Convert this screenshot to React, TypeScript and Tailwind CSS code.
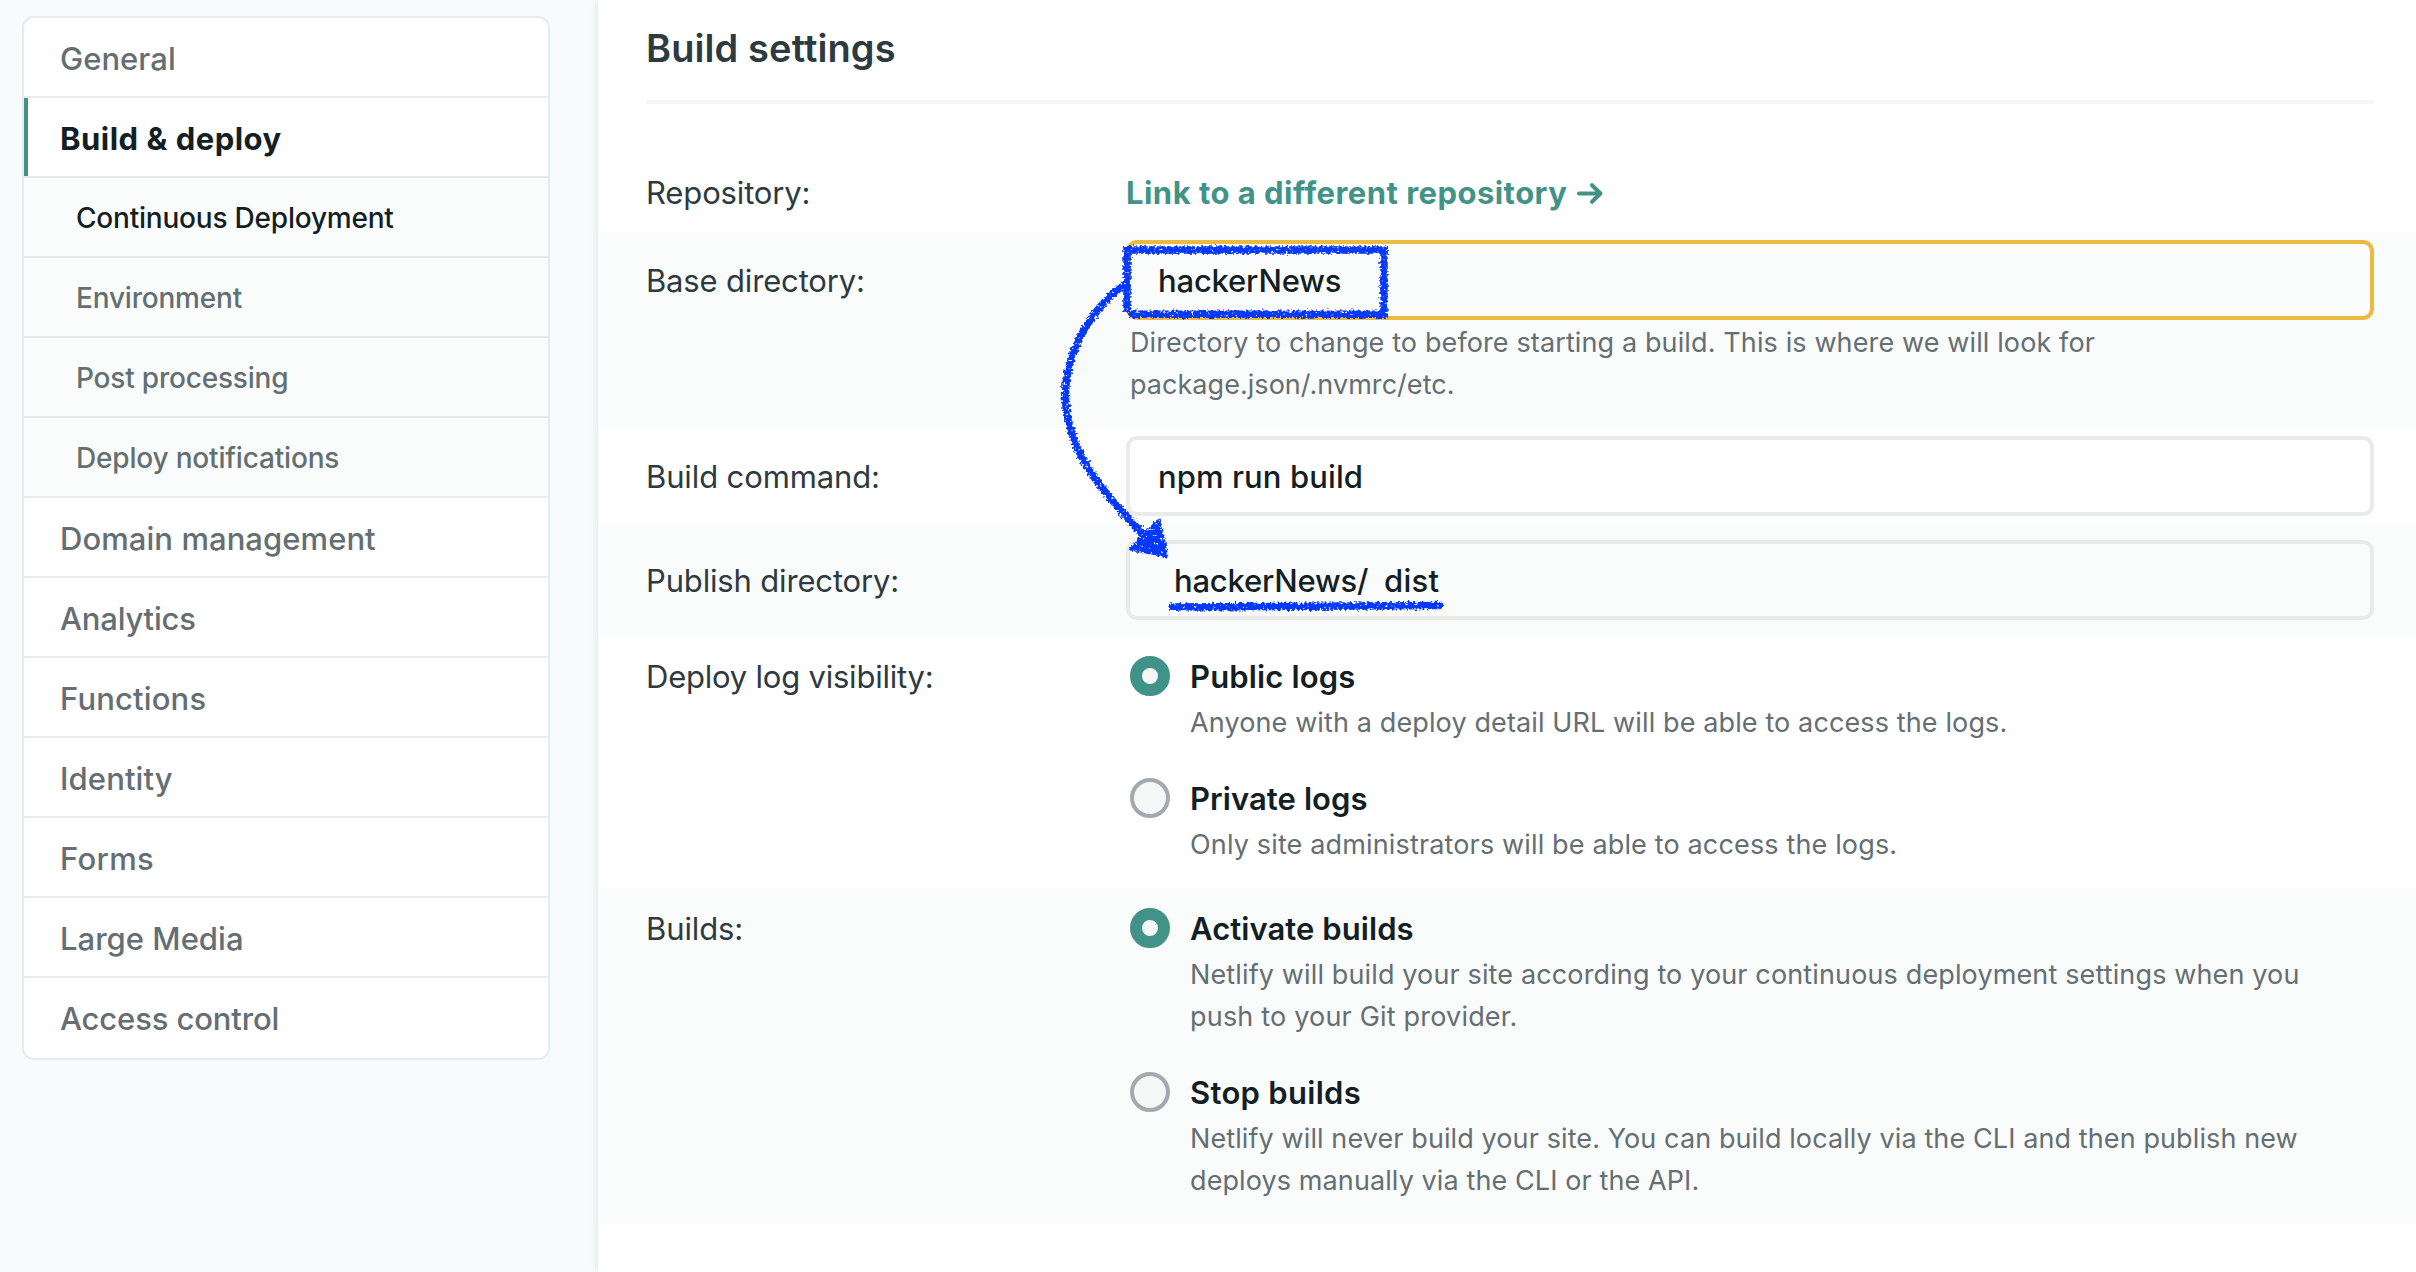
import React from "react";

type NavItem = { label: string; kind: "main" | "active" | "sub" | "current"; tracking: string };

const NAV: NavItem[] = [
  { label: "General", kind: "main", tracking: "tracking-[0.03px]" },
  { label: "Build & deploy", kind: "active", tracking: "tracking-[0.5px]" },
  { label: "Continuous Deployment", kind: "current", tracking: "tracking-[-0.21px]" },
  { label: "Environment", kind: "sub", tracking: "tracking-[-0.2px]" },
  { label: "Post processing", kind: "sub", tracking: "tracking-[-0.2px]" },
  { label: "Deploy notifications", kind: "sub", tracking: "tracking-[-0.18px]" },
  { label: "Domain management", kind: "main", tracking: "tracking-[0.06px]" },
  { label: "Analytics", kind: "main", tracking: "tracking-[-0.2px]" },
  { label: "Functions", kind: "main", tracking: "tracking-[0.16px]" },
  { label: "Identity", kind: "main", tracking: "tracking-[0.12px]" },
  { label: "Forms", kind: "main", tracking: "tracking-[0.3px]" },
  { label: "Large Media", kind: "main", tracking: "tracking-[0.02px]" },
  { label: "Access control", kind: "main", tracking: "tracking-[-0.14px]" },
];

const NAV_STYLE = {
  main: "bg-white pl-9 pt-[17px] text-[31px] font-medium text-[#646e73]",
  active: "border-l-4 border-l-[#419388] bg-white pl-8 pt-[17px] text-[31px] font-bold text-[#131e25]",
  sub: "bg-[#fafcfb] pl-[52px] pt-4 text-[28px] font-medium text-[#646e73]",
  current: "bg-[#fafcfb] pl-[52px] pt-4 text-[28px] font-medium text-[#131e25]",
};

function Sidebar() {
  return (
    <nav className="ml-[22px] mt-4 h-[1044px] w-[528px] shrink-0 overflow-hidden rounded-[12px] border-2 border-[#e9ebeb] bg-white">
      {NAV.map((item) => (
        <div key={item.label} className="h-20 border-b-2 border-[#e9ebeb] last:border-b-0">
          <div className={`h-full leading-[48px] whitespace-nowrap ${NAV_STYLE[item.kind]} ${item.tracking}`}>
            {item.label}
          </div>
        </div>
      ))}
    </nav>
  );
}

function Row({
  label,
  tracking,
  className,
  labelPad,
  children,
}: {
  label: string;
  tracking: string;
  className: string;
  labelPad: string;
  children: React.ReactNode;
}) {
  return (
    <div className={`flex shrink-0 pl-12 pr-[42px] ${className}`}>
      <div
        className={`w-[480px] shrink-0 text-[31px] leading-[48px] whitespace-nowrap text-[#2d3a3f] ${tracking} ${labelPad}`}
      >
        {label}
      </div>
      <div className="min-w-0 flex-1">{children}</div>
    </div>
  );
}

function Field({ className, children }: { className: string; children: React.ReactNode }) {
  return (
    <div
      className={`flex h-20 rounded-[11px] border-4 pt-[13px] pl-7 text-[31px] leading-[48px] font-medium whitespace-nowrap text-[#131e25] ${className}`}
    >
      {children}
    </div>
  );
}

function Line({ tracking, children }: { tracking: string; children: React.ReactNode }) {
  return (
    <div className={`text-[27px] leading-[42px] whitespace-nowrap text-[#646e73] ${tracking}`}>{children}</div>
  );
}

function Option({
  title,
  tracking,
  checked = false,
  children,
}: {
  title: string;
  tracking: string;
  checked?: boolean;
  children: React.ReactNode;
}) {
  return (
    <div className="flex gap-5 pl-1">
      <span
        className={`mt-[3px] size-10 shrink-0 rounded-full bg-[#f5f7f7] ${
          checked ? "border-[12px] border-[#419388]" : "border-4 border-[#a3a9ac]"
        }`}
      />
      <div>
        <div
          className={`mb-px text-[31px] leading-[48px] font-semibold whitespace-nowrap text-[#131e25] ${tracking}`}
        >
          {title}
        </div>
        {children}
      </div>
    </div>
  );
}

function Annotations() {
  return (
    <svg
      className="pointer-events-none absolute top-0 left-0"
      width="2416"
      height="1272"
      viewBox="0 0 2416 1272"
      fill="none"
      stroke="#0439fb"
    >
      <defs>
        <filter
          id="crayon"
          filterUnits="userSpaceOnUse"
          x="1040"
          y="220"
          width="430"
          height="410"
          colorInterpolationFilters="sRGB"
        >
          <feTurbulence type="fractalNoise" baseFrequency="0.4" numOctaves="2" seed="7" result="noise" />
          <feDisplacementMap
            in="SourceGraphic"
            in2="noise"
            scale="6"
            xChannelSelector="R"
            yChannelSelector="G"
            result="rough"
          />
          <feTurbulence type="fractalNoise" baseFrequency="0.35" numOctaves="2" seed="21" result="grain" />
          <feColorMatrix in="grain" type="matrix" values="0 0 0 0 0  0 0 0 0 0  0 0 0 0 0  0 9 0 0 -2.1" result="holes" />
          <feComposite in="rough" in2="holes" operator="in" />
        </filter>
      </defs>
      <g filter="url(#crayon)" strokeWidth="7.5">
        <path d="M1124 250H1388" />
        <path d="M1384 247V317" />
        <path d="M1127 246V312" />
        <path d="M1129 314.300H1387" />
        <path d="M1126 283C1085 314 1064 359 1065.500 400C1068 450 1098 488 1144 535" />
        <path d="M1158.500 520L1167 556L1130.500 549Z" fill="#0439fb" strokeWidth="3" strokeLinejoin="round" />
        <path d="M1169 607L1443 605.500" />
      </g>
    </svg>
  );
}

export default function App() {
  return (
    <div className="relative flex h-[1272px] w-[2416px] overflow-hidden bg-[#f7fbfc] font-['Inter',sans-serif]">
      <Sidebar />
      <main className="ml-12 flex flex-1 flex-col bg-white shadow-[0_0_8px_rgba(14,30,37,0.12)]">
        <div className="mr-[42px] ml-12 h-[104px] border-b-4 border-[#f5f6f6] pt-6">
          <h1 className="text-[38px] leading-[48px] font-semibold tracking-[0.1px] text-[#2d3a3f]">
            Build settings
          </h1>
        </div>

        <Row label="Repository:" tracking="tracking-[-0.14px]" className="h-32" labelPad="pt-[65px]">
          <a className="flex pt-[65px] text-[31px] leading-[48px] font-bold tracking-[0.47px] whitespace-nowrap text-[#419388]">
            Link to a different repository
            <svg
              className="mt-[13px] ml-[9px]"
              width="28"
              height="24"
              viewBox="0 0 28 24"
              fill="none"
              stroke="currentColor"
              strokeWidth="4"
              strokeLinecap="round"
              strokeLinejoin="round"
            >
              <path d="M3 11.500H24M16 3.200L24.500 11.500L16 19.800" />
            </svg>
          </a>
        </Row>

        <Row label="Base directory:" tracking="tracking-[-0.16px]" className="h-[196px] bg-[#fafcfb]" labelPad="pt-[25px]">
          <div className="pt-2">
            <Field className="border-[#ebba40] tracking-[-0.18px]">hackerNews</Field>
            <div className="mt-0.5 pl-1">
              <Line tracking="tracking-[0.12px]">
                Directory to change to before starting a build. This is where we will look for
              </Line>
              <Line tracking="tracking-[0.04px]">package.json/.nvmrc/etc.</Line>
            </div>
          </div>
        </Row>

        <Row label="Build command:" tracking="tracking-[-0.12px]" className="h-24" labelPad="pt-[25px]">
          <div className="pt-2">
            <Field className="border-[#e9ebeb] tracking-[0.1px]">npm run build</Field>
          </div>
        </Row>

        <Row label="Publish directory:" tracking="tracking-[-0.16px]" className="h-28 bg-[#fafcfb]" labelPad="pt-[33px]">
          <div className="pt-4">
            <Field className="border-[#e9ebeb]">
              <span className="ml-4 w-[210px] tracking-[-0.2px]">hackerNews/</span>
              <span className="tracking-[0.3px]">dist</span>
            </Field>
          </div>
        </Row>

        <Row label="Deploy log visibility:" tracking="tracking-[-0.22px]" className="h-[252px]" labelPad="pt-[17px]">
          <div className="flex flex-col gap-[31px] pt-[17px]">
            <Option title="Public logs" tracking="tracking-[0.14px]" checked>
              <Line tracking="tracking-[0.12px]">Anyone with a deploy detail URL will be able to access the logs.</Line>
            </Option>
            <Option title="Private logs" tracking="tracking-[0.08px]">
              <Line tracking="tracking-[0.15px]">Only site administrators will be able to access the logs.</Line>
            </Option>
          </div>
        </Row>

        <Row label="Builds:" tracking="tracking-[-0.1px]" className="h-[336px] bg-[#fafcfb]" labelPad="pt-[17px]">
          <div className="flex flex-col gap-[31px] pt-[17px]">
            <Option title="Activate builds" tracking="tracking-[0.07px]" checked>
              <Line tracking="tracking-[0.135px]">
                Netlify will build your site according to your continuous deployment settings when you
              </Line>
              <Line tracking="tracking-[0.19px]">push to your Git provider.</Line>
            </Option>
            <Option title="Stop builds" tracking="tracking-[0.3px]">
              <Line tracking="tracking-[0.1px]">
                Netlify will never build your site. You can build locally via the CLI and then publish new
              </Line>
              <Line tracking="tracking-[0.1px]">deploys manually via the CLI or the API.</Line>
            </Option>
          </div>
        </Row>
      </main>
      <Annotations />
    </div>
  );
}
